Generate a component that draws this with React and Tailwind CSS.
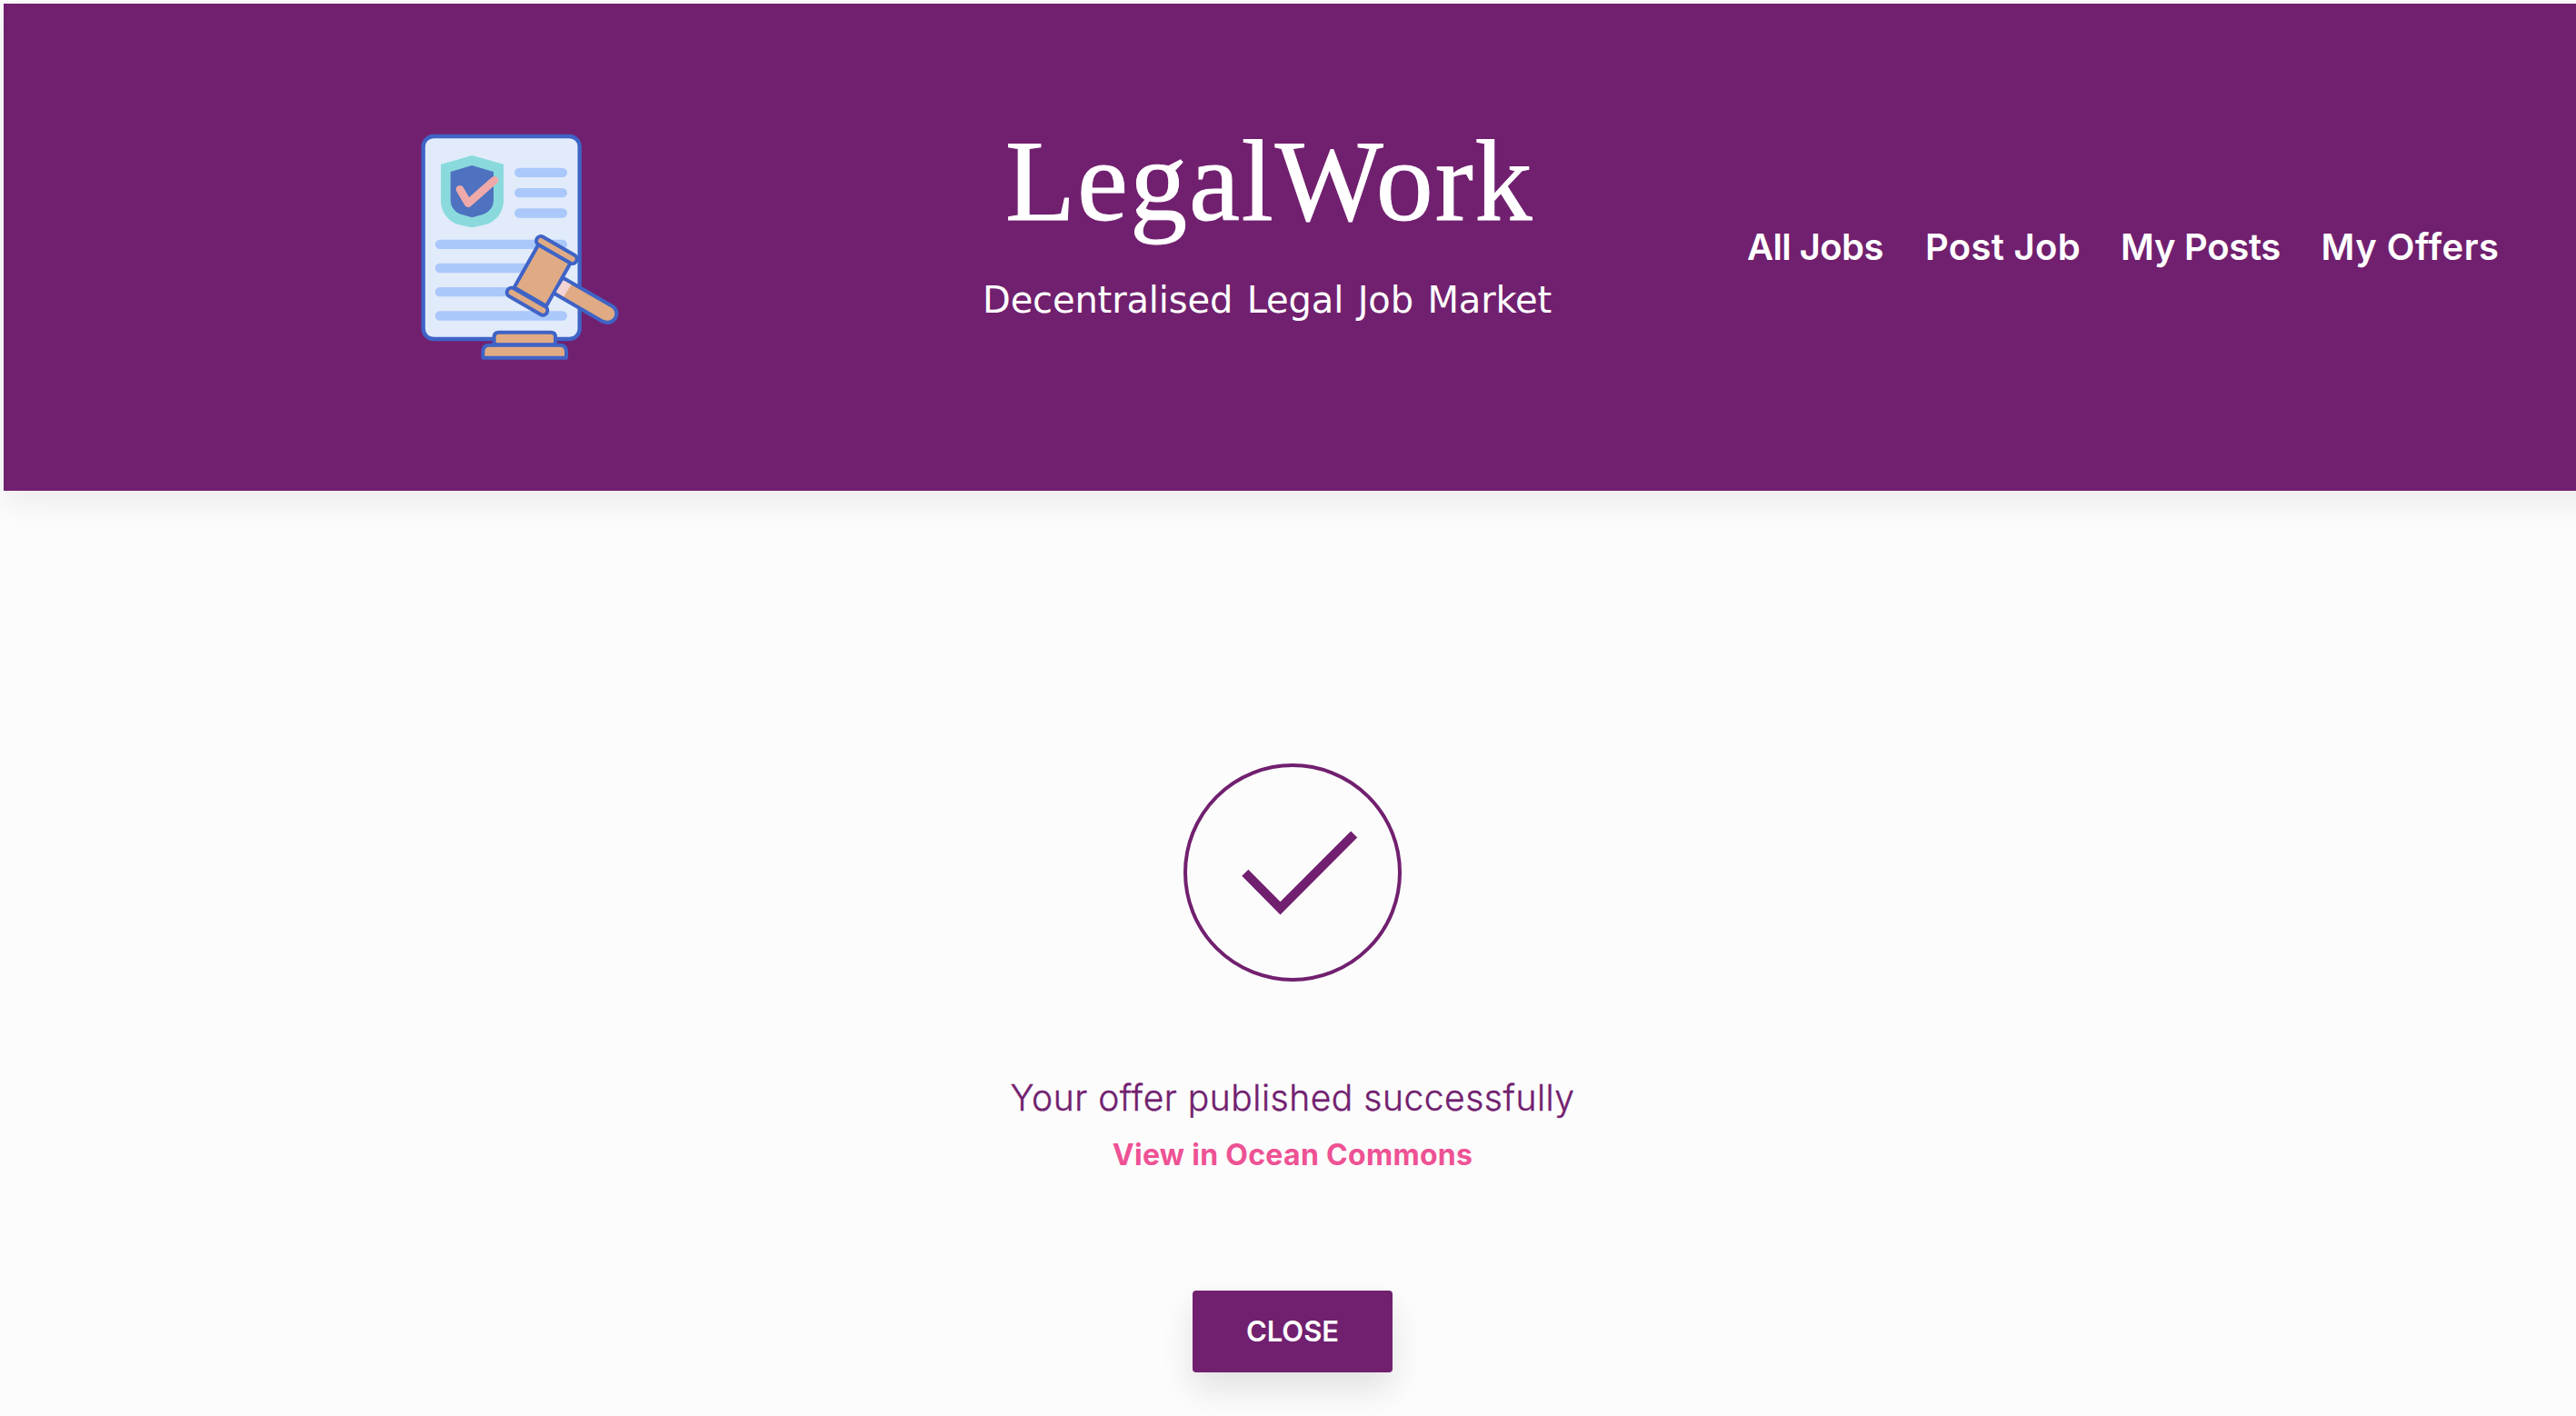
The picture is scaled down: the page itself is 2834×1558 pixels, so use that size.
const NAV = [
  { label: 'All Jobs', className: 'w-[196px] tracking-[-0.6px]' },
  { label: 'Post Job', className: 'w-[215px] tracking-[0.3px]' },
  { label: 'My Posts', className: 'w-[220.500px] tracking-[-0.3px]' },
  { label: 'My Offers', className: 'tracking-[0.5px]' },
];

function Logo() {
  return (
    <svg className="block h-[280px] w-[260px]" viewBox="0 0 780 840" fill="none">
      <rect x="77" y="60" width="516" height="669" rx="34" fill="#e1ebfa" stroke="#3f63c6" strokeWidth="13" />
      <path d="M238 123 342 152V272C342 310 316 343 280 352L238 361 196 352C160 343 135 310 135 272V152Z" fill="#8adadd" />
      <path d="M238 156 309 177V270C309 293 294 312 273 318L238 328 203 318C182 312 167 293 167 270V177Z" fill="#4e72c0" />
      <path d="M198 235 225 281 312 205" stroke="#f0a9a9" strokeWidth="26" strokeLinecap="round" strokeLinejoin="round" />
      <g stroke="#abc8fb" strokeWidth="31" strokeLinecap="round">
        <path d="M393.500 179.500H536.500M393.500 246.500H536.500M393.500 313.500H536.500" />
        <path d="M131.500 416.500H536.500M131.500 495H480M131.500 573.500H450M131.500 652.500H536.500" />
      </g>
      <g stroke="#3f63c6" strokeWidth="12" strokeLinejoin="round" fill="#e0ab84">
        <path d="M311 748V722Q311 707 326 707H498Q513 707 513 722V748Z" />
        <path d="M274 791V771Q274 749 296 749H527Q549 749 549 771V791Z" />
        <path d="M541 529 700 620Q723 635 711 660Q695 682 669 671L510 579Z" />
        <path d="M457 418 377 559 483 620 563 478Z" />
        <rect x="-75" y="-15" width="150" height="30" rx="15" transform="translate(517 435) rotate(30)" />
        <rect x="-75" y="-15" width="150" height="30" rx="15" transform="translate(420 605) rotate(30)" />
      </g>
      <path d="M539 535 565 550 541 589 515 574Z" fill="#f4d3d5" />
    </svg>
  );
}

export default function App() {
  return (
    <div className="flex h-[1558px] w-[2834px] flex-col overflow-hidden bg-[#fcfcfc] pl-1 pt-1 font-['Inter',sans-serif]">
      <header className="flex h-[536px] w-[2920px] shrink-0 items-start bg-[#71206f] shadow-[0_12px_36px_0_rgba(0,0,0,0.07)]">
        <div className="ml-[436px] mt-[126px]">
          <Logo />
        </div>
        <div className="ml-[377px] mt-[126px] flex w-[630px] flex-col">
          <h1 className="ml-[29px] h-[140px] whitespace-nowrap font-['Liberation_Serif',serif] text-[126px] leading-[140px] tracking-[2px] text-white [-webkit-text-stroke:1px_white]">
            LegalWork
          </h1>
          <p className="ml-1 mt-9 whitespace-nowrap font-['DejaVu_Sans',sans-serif] text-[40px] leading-[48px] tracking-[-0.15px] text-white [word-spacing:3px]">
            Decentralised Legal Job Market
          </p>
        </div>
        <nav className="ml-[215px] flex self-center text-[40px] font-semibold leading-[48px] text-white">
          {NAV.map((item) => (
            <a key={item.label} href="#" className={'shrink-0 whitespace-nowrap ' + item.className}>
              {item.label}
            </a>
          ))}
        </nav>
      </header>
      <main className="flex w-[2836px] flex-col items-center pt-[300px]">
        <svg className="block h-[240px] w-[240px]" viewBox="0 0 240 240" fill="none" stroke="#71206f">
          <circle cx="120" cy="120" r="118" strokeWidth="4" />
          <path d="M67.800 120.300 106.500 159.300 187.700 78" strokeWidth="10" />
        </svg>
        <p className="mt-[104px] whitespace-nowrap text-[39px] font-light leading-[48px] tracking-[0.520px] text-[#71206f] [-webkit-text-stroke:0.4px_#71206f]">
          Your offer published successfully
        </p>
        <a href="#" className="mt-[19px] whitespace-nowrap text-[32px] font-bold leading-[40px] tracking-[0.3px] text-[#ee5294]">
          View in Ocean Commons
        </a>
        <button className="mt-[129px] h-[90px] w-[220px] rounded bg-[#71206f] text-[31px] font-semibold text-white shadow-[0_18px_36px_0_rgba(0,0,0,0.11)]">
          CLOSE
        </button>
      </main>
    </div>
  );
}
